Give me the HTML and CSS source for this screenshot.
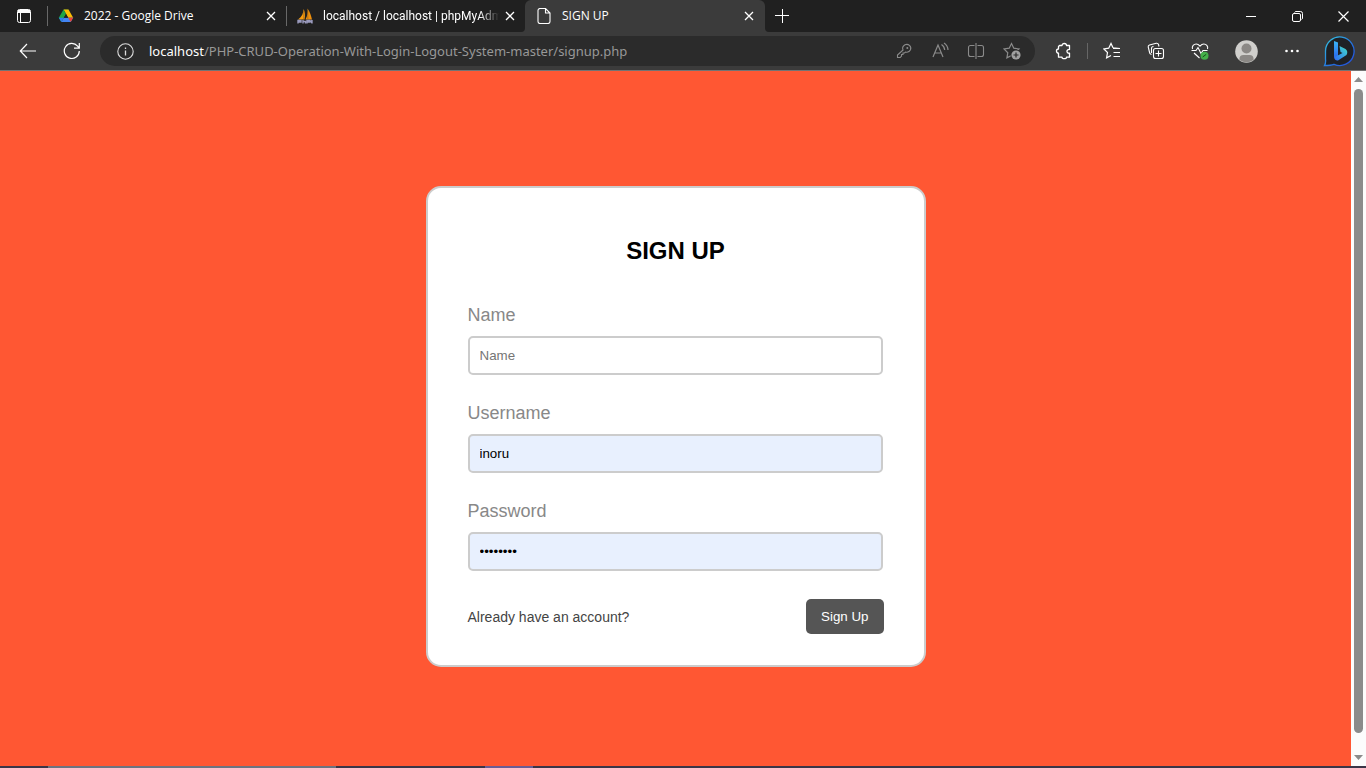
FILE: index.html
```html
<!DOCTYPE html>
<html lang="en">
<head>
<meta charset="utf-8">
<title>SIGN UP</title>
<link rel="stylesheet" href="styles.css">
</head>
<body>
<header class="browser">
  <div class="tabstrip">
    <div class="strip-left">
      <button class="workspace" aria-label="Tab actions">
        <svg width="16" height="16" viewBox="0 0 16 16"><rect x="1.5" y="1.5" width="13" height="13" rx="2" fill="none" stroke="#fff"/><path d="M2 2h12v3H2z" fill="#fff"/><path d="M4.5 5v9" stroke="#fff"/></svg>
      </button>
      <div class="tab">
        <svg class="tab-icon" width="16" height="16" viewBox="0 0 16 16"><path d="M5.500 1.500h5L8 6z" fill="#188038"/><path d="M10.500 1.500L15.200 9.700h-5L5.600 1.500z" fill="#fbbc04"/><path d="M5.500 1.500L8 6 5.800 9.700 3.300 14 .8 9.700z" fill="#1ea446"/><path d="M5.800 9.700h9.400L12.700 14H3.300z" fill="#4285f4"/><path d="M10.200 9.700h5L12.700 14z" fill="#ea4335"/><path d="M.8 9.700h5L3.300 14z" fill="#2f7df0"/><path d="M8 6l2.200 3.700H5.800z" fill="#202020"/></svg>
        <span class="tab-title">2022 - Google Drive</span>
        <button class="tab-close" aria-label="Close tab"><svg width="10" height="10" viewBox="0 0 10 10"><path d="M1 1l8 8M9 1L1 9" stroke="#fff" stroke-width="1.300"/></svg></button>
      </div>
      <div class="tab tab-last">
        <svg class="tab-icon" width="16" height="16" viewBox="0 0 16 16"><path d="M6.500 1C6.500 5 5 8.500 1 11.500h6.500C8.500 7.500 8 3.500 6.500 1z" fill="#f89c0e"/><path d="M10.500.5C11 4 10.500 8 8.500 11.500H15c-1-4-2-8-4.500-11z" fill="#f0900c"/><path d="M6.800 2v9M10.800 2v9" stroke="#8b5a1c" stroke-width=".6"/><path d="M1 15.500v-3h3v1.500H1M6 12v3.500M6 13.500h2.500v2M10 15.500v-3h2.500v1.500H10M12.500 12l1.500 2 1-2v3.500" fill="none" stroke="#9a9abd" stroke-width="1.400"/></svg>
        <span class="tab-title tab-title-fade">localhost / localhost | phpMyAdmin</span>
        <button class="tab-close" aria-label="Close tab"><svg width="10" height="10" viewBox="0 0 10 10"><path d="M1 1l8 8M9 1L1 9" stroke="#fff" stroke-width="1.300"/></svg></button>
      </div>
    </div>
    <div class="active-wrap">
      <div class="tab tab-active">
        <svg class="tab-icon" width="16" height="16" viewBox="0 0 16 16"><path d="M4 .5h5.500L14 5v8.500a2 2 0 0 1-2 2H4a2 2 0 0 1-2-2v-11a2 2 0 0 1 2-2zM9.500.5V5H14" fill="none" stroke="#fff" stroke-width="1.100"/></svg>
        <span class="tab-title">SIGN UP</span>
        <button class="tab-close" aria-label="Close tab"><svg width="10" height="10" viewBox="0 0 10 10"><path d="M1 1l8 8M9 1L1 9" stroke="#fff" stroke-width="1.300"/></svg></button>
      </div>
    </div>
    <div class="strip-right">
      <button class="new-tab" aria-label="New tab"><svg width="14" height="14" viewBox="0 0 14 14"><path d="M0 6.500h14M7.500 0v14" stroke="#fff"/></svg></button>
      <div class="window-controls">
        <button class="window-button" aria-label="Minimize"><svg width="10" height="10" viewBox="0 0 10 10"><path d="M0 5.500h10" stroke="#fff"/></svg></button>
        <button class="window-button" aria-label="Restore"><svg width="11" height="11" viewBox="0 0 11 11"><rect x=".5" y="2.500" width="8" height="8" rx="1.500" fill="none" stroke="#fff"/><path d="M2.500 1.500Q3 .5 4 .5h4.500a2 2 0 0 1 2 2V7q0 1-1 1.500" fill="none" stroke="#fff"/></svg></button>
        <button class="window-button" aria-label="Close"><svg width="11" height="11" viewBox="0 0 11 11"><path d="M.5.5l10 10M10.500.5l-10 10" stroke="#fff" stroke-width="1.200"/></svg></button>
      </div>
    </div>
  </div>
  <div class="toolbar">
    <button class="nav-button" aria-label="Back"><svg width="18" height="16" viewBox="0 0 18 16"><path d="M17 8H1.500M8 1L1.300 8 8 15" fill="none" stroke="#fff" stroke-width="1.200"/></svg></button>
    <button class="nav-button" aria-label="Refresh"><svg width="18" height="18" viewBox="0 0 18 18"><path d="M16.300 9A7.500 7.500 0 1 1 14.600 4.200L16 6M16.300 1v5.200H11" fill="none" stroke="#fff" stroke-width="1.200"/></svg></button>
    <div class="address">
      <button class="info" aria-label="Site information"><svg width="17" height="17" viewBox="0 0 17 17"><circle cx="8.500" cy="8.500" r="7.700" fill="none" stroke="#ddd" stroke-width="1.100"/><path d="M8.500 7.500v5M8.500 4.500v1.400" stroke="#ddd" stroke-width="1.300"/></svg></button>
      <a class="url" href="#"><span class="url-host">localhost</span>/PHP-CRUD-Operation-With-Login-Logout-System-master/signup.php</a>
      <button class="address-button" aria-label="Saved password"><svg width="18" height="18" viewBox="0 0 18 18"><path d="M10 2.800a4 4 0 0 1 5.500 5c-1 2-3 2.800-5 2.200l-1 1H8v1.500H6.500V14l-1.300 1.500H2.500V13L8 8c-.8-2 .2-4.200 2-5.200z" fill="none" stroke="#8b8b8b" stroke-width="1.100"/><circle cx="12.300" cy="5.900" r="1" fill="#8b8b8b"/></svg></button>
      <button class="address-button" aria-label="Read aloud"><svg width="18" height="18" viewBox="0 0 18 18"><path d="M2 15L7 3l5 12M3.700 11h6.600M10.500 2.500q3 2 3.200 5.500M13 1q3.800 2.500 4 7" fill="none" stroke="#8b8b8b" stroke-width="1.200"/></svg></button>
      <button class="address-button" aria-label="Split screen"><svg width="18" height="18" viewBox="0 0 18 18"><path d="M7.500 3.500h-4a2 2 0 0 0-2 2v7a2 2 0 0 0 2 2h4M10.500 3.500h4a2 2 0 0 1 2 2v7a2 2 0 0 1-2 2h-4M9 1v16" fill="none" stroke="#8b8b8b" stroke-width="1.100"/></svg></button>
      <button class="address-button" aria-label="Add to favorites"><svg width="18" height="18" viewBox="0 0 18 18"><path d="M8.500 1.500l2.300 4.700 5.200.8-3.800 3.700.9 5.200-4.600-2.400-4.600 2.400.9-5.200L1 7l5.200-.8z" fill="none" stroke="#8b8b8b" stroke-width="1.200"/><circle cx="13" cy="13" r="5.500" fill="#2b2b2b"/><circle cx="13" cy="13" r="4.600" fill="#a0a0a0"/><path d="M10.500 13h5M13 10.500v5" stroke="#2b2b2b" stroke-width="1.200"/></svg></button>
    </div>
    <button class="extension" aria-label="Extensions"><svg width="18" height="18" viewBox="0 0 18 18"><path d="M4.500 3.500H7C7 .8 11.500.8 11.500 3.500h3v4c-3.400-.4-3.400 4.100 0 3.700v4h-3c0 2-4.500 2-4.500 0H3.500v-4c-2.700 0-2.700-4.200 0-4.200V4.500z" fill="none" stroke="#fff" stroke-width="1.300" stroke-linejoin="round"/></svg></button>
    <span class="divider"></span>
    <button class="tool" aria-label="Favorites"><svg width="18" height="18" viewBox="0 0 18 18"><path d="M10 5.800L8 1.500 5.700 6.200.9 7l3.600 3.500-.9 5.300L8 13.500M10 5.800L17 6.500" fill="none" stroke="#fff" stroke-width="1.200"/><path d="M10 6.500h7M10.500 10.500h6.500M10.500 14.500h6.500" stroke="#fff" stroke-width="1.200"/></svg></button>
    <button class="tool" aria-label="Collections"><svg width="18" height="18" viewBox="0 0 18 18"><rect x="6.500" y="6.500" width="10" height="10" rx="2" fill="none" stroke="#fff" stroke-width="1.100"/><path d="M11.500 8.500v6M8.500 11.500h6M4.500 12.500Q3 12 2.700 11L1.200 5Q1 3.500 2.500 3l6.700-1.700Q11 1 11.500 2.500L12 4.500M4.500 11V6.500a2 2 0 0 1 2-2" fill="none" stroke="#fff" stroke-width="1.100"/></svg></button>
    <button class="tool" aria-label="Browser essentials"><svg width="18" height="18" viewBox="0 0 18 18"><path d="M1.500 7C.5 4 3 2 5.200 2 7 2 8 3 9 4.200 10 3 11 2 12.800 2 15 2 17.500 4 16.500 7M.5 8.500H5L7 5.500l3 6 2-3h4.500M3 11l5.500 5" fill="none" stroke="#fff" stroke-width="1.100"/><circle cx="13.500" cy="13.800" r="4" fill="#45b04a"/><path d="M11.700 15l3.500-2.700" fill="none" stroke="#174d1b"/></svg></button>
    <button class="tool tool-wide" aria-label="Profile"><svg width="23" height="23" viewBox="0 0 23 23"><circle cx="11.500" cy="11.500" r="11.300" fill="#d0cfcc"/><circle cx="11.500" cy="8.500" r="5" fill="#8b8885"/><path d="M4.500 20q-.5-5 4-5h6q4.500 0 4 5-7 4.500-14 0z" fill="#8b8885"/></svg></button>
    <button class="tool" aria-label="Settings and more"><svg width="14" height="4" viewBox="0 0 14 4"><circle cx="1.500" cy="2" r="1.300" fill="#fff"/><circle cx="7" cy="2" r="1.300" fill="#fff"/><circle cx="12.500" cy="2" r="1.300" fill="#fff"/></svg></button>
    <button class="tool tool-bing" aria-label="Bing">
      <svg width="32" height="32" viewBox="0 0 32 32"><defs><linearGradient id="ring" x1="0" y1="0" x2="1" y2="1"><stop offset="0" stop-color="#35c8e0"/><stop offset=".6" stop-color="#2470e0"/><stop offset="1" stop-color="#2349d8"/></linearGradient><linearGradient id="stem" x1="0" y1="0" x2="0" y2="1"><stop offset="0" stop-color="#3bb5f5"/><stop offset="1" stop-color="#2862ec"/></linearGradient><linearGradient id="bowl" x1="1" y1="0" x2="0" y2="1"><stop offset="0" stop-color="#42dfc8"/><stop offset="1" stop-color="#2f68f5"/></linearGradient></defs><path d="M1.500 30.500Q3 28 2.500 24V16a14.300 14.300 0 1 1 8.500 13.300C8 30.500 5 30.500 1.500 30.500z" fill="#1f2125" stroke="url(#ring)" stroke-width="1.300"/><path d="M11 6l4 1.500V21l-2 3-2-2z" fill="url(#stem)"/><path d="M16.500 11l6 3q3 2.500 1 6L15 25.500q-3 .5-4-3l8.500-4.500-2-1z" fill="url(#bowl)"/></svg>
    </button>
  </div>
</header>
<div class="viewport">
  <main class="page">
    <form class="card">
      <h2 class="title">SIGN UP</h2>
      <label class="label" for="name">Name</label>
      <input class="field" id="name" type="text" placeholder="Name">
      <label class="label" for="username">Username</label>
      <input class="field field-filled" id="username" type="text" value="inoru">
      <label class="label" for="password">Password</label>
      <input class="field field-filled" id="password" type="password" value="password">
      <div class="actions">
        <a class="login-link" href="#">Already have an account?</a>
        <button class="submit" type="button">Sign Up</button>
      </div>
    </form>
  </main>
  <div class="scrollbar">
    <svg width="9" height="5" viewBox="0 0 9 5"><path d="M4.500 0L9 5H0z" fill="#8b8b8b"/></svg>
    <div class="thumb"></div>
    <svg width="9" height="5" viewBox="0 0 9 5"><path d="M0 0h9L4.500 5z" fill="#8b8b8b"/></svg>
  </div>
</div>
<footer class="taskbar"><span class="task-search"></span><span class="task-app"></span></footer>
</body>
</html>
```
FILE: styles.css
```css
* { box-sizing: border-box; }

body {
  margin: 0;
  height: 100vh;
  display: flex;
  flex-direction: column;
  overflow: hidden;
  font-family: "Liberation Sans", Arial, sans-serif;
}

button {
  border: 0;
  padding: 0;
  background: none;
  color: inherit;
  font-family: inherit;
}

svg { display: block; flex: none; }

.browser {
  background: #3b3b3b;
  border-bottom: 1px solid #737373;
  color: #fff;
  font-family: "Open Sans", "Segoe UI", sans-serif;
}

.tabstrip { display: flex; height: 32px; }

.strip-left {
  display: flex;
  background: #202020;
  border-bottom-right-radius: 4px;
}

.strip-right {
  display: flex;
  flex: 1;
  justify-content: space-between;
  background: #202020;
  border-bottom-left-radius: 4px;
}

.workspace {
  display: flex;
  align-items: center;
  justify-content: center;
  width: 48px;
  background: linear-gradient(#686868, #686868) right / 1px 20px no-repeat;
}

.tab {
  display: flex;
  align-items: center;
  gap: 10px;
  width: 239px;
  height: 32px;
  padding: 0 7px 0 10px;
  background: linear-gradient(#686868, #686868) right / 1px 20px no-repeat;
  font-size: 12px;
}

.tab-last {
  width: 238px;
  padding-right: 6px;
  background: none;
}

.active-wrap { background: linear-gradient(#202020 8px, #3b3b3b 8px); }

.active-wrap .tab-active {
  width: 240px;
  padding-left: 11px;
  border-radius: 6px 6px 0 0;
  background: #3b3b3b;
}

.tab-title {
  flex: 1;
  overflow: hidden;
  line-height: 16px;
  white-space: nowrap;
}

.tab-title-fade {
  font-family: Roboto, "Segoe UI", sans-serif;
  mask-image: linear-gradient(to right, #000 88%, transparent 99%);
}

.tab-close {
  display: flex;
  align-items: center;
  justify-content: center;
  width: 18px;
  height: 18px;
}

.tab-title + .tab-close { margin-left: -10px; }

.new-tab {
  display: flex;
  align-items: center;
  justify-content: center;
  width: 34px;
}

.window-controls { display: flex; }

.window-button {
  display: flex;
  align-items: center;
  justify-content: center;
  width: 46px;
}

.toolbar {
  display: flex;
  align-items: center;
  height: 38px;
  padding: 0 2px 0 6px;
}

.nav-button {
  display: flex;
  align-items: center;
  justify-content: center;
  width: 44px;
}

.address {
  display: flex;
  flex: 1;
  align-items: center;
  height: 30px;
  margin: 0 11px 0 6px;
  padding: 0 5px 0 17px;
  border-radius: 15px;
  background: #2b2b2b;
}

.url {
  flex: 1;
  margin-left: 15px;
  overflow: hidden;
  color: #989898;
  font-family: "Noto Sans", "Segoe UI", sans-serif;
  font-size: 13px;
  text-decoration: none;
  white-space: nowrap;
}

.url-host { color: #fff; }

.address-button,
.extension {
  display: flex;
  align-items: center;
  justify-content: center;
  width: 36px;
}

.divider {
  width: 1px;
  height: 16px;
  margin: 0 2px 0 5px;
  background: #666;
}

.tool {
  display: flex;
  align-items: center;
  justify-content: center;
  width: 44px;
}

.tool-wide { width: 48px; }

.tool-bing { width: 50px; }

.viewport {
  display: flex;
  flex: 1;
  min-height: 0;
}

.page {
  display: flex;
  flex: 1;
  align-items: center;
  justify-content: center;
  padding-top: 16px;
  background: #ff5733;
}

.card {
  display: flex;
  flex-direction: column;
  width: 500px;
  padding: 49px 40px 31px;
  border: 2px solid #ccc;
  border-radius: 15px;
  background: #fff;
}

.title {
  margin: 0 0 40px;
  font-size: 24px;
  line-height: 28px;
  text-align: center;
}

.label {
  margin-bottom: 10px;
  color: #888;
  font-size: 18px;
  line-height: 21px;
}

.field {
  height: 39px;
  margin: 0 1px 28px 0;
  padding: 10px;
  border: 2px solid #ccc;
  border-radius: 5px;
  background: #fff;
  color: #000;
  font-family: inherit;
}

.field::placeholder { color: #757575; }

.field-filled { background: #e8f0fe; }

.actions {
  display: flex;
  align-items: center;
  justify-content: space-between;
}

.login-link {
  color: #444;
  font-size: 14px;
  text-decoration: none;
}

.submit {
  height: 35px;
  padding: 0 15px;
  border-radius: 5px;
  background: #555;
  color: #fff;
}

.scrollbar {
  display: flex;
  flex-direction: column;
  align-items: center;
  gap: 7px;
  width: 15px;
  padding: 6px 0;
  background: #fcfcfc;
}

.thumb {
  flex: 1;
  width: 9px;
  margin-bottom: 15px;
  border-radius: 5px;
  background: #8b8b8b;
}

.taskbar {
  display: flex;
  height: 2px;
  background: #3b3547;
}

.task-search {
  width: 288px;
  margin: 0 149px 0 48px;
  background: #6c7380;
}

.task-app { width: 48px; background: #6a5c94; }
```
